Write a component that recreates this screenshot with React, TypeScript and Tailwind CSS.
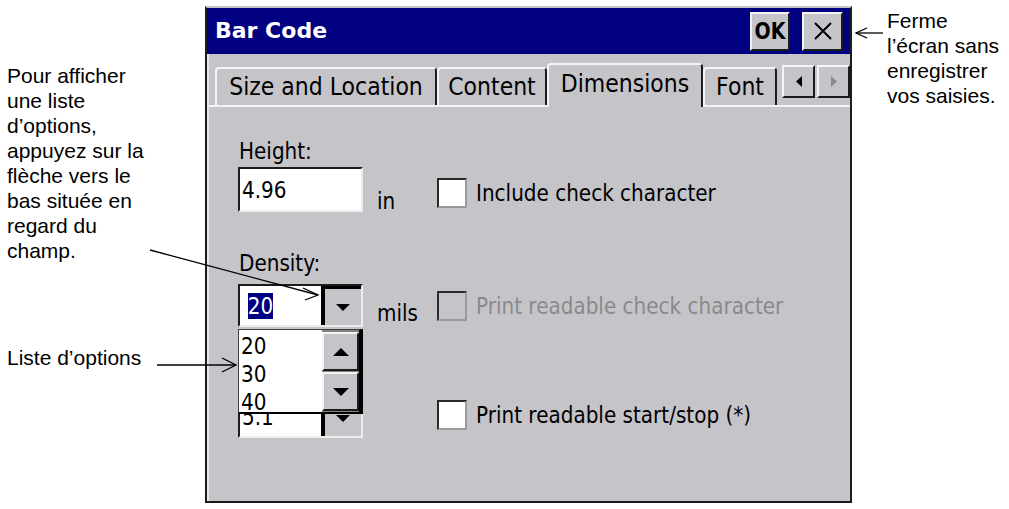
import React from "react";

const GRAY = "bg-[#c5c4c9]";
const raised =
  "border-2 border-t-[#f4f4f4] border-l-[#f4f4f4] border-r-[#1c1c1c] border-b-[#1c1c1c]";
const sunken =
  "border-2 border-t-[#1c1c1c] border-l-[#1c1c1c] border-r-[#ececec] border-b-[#ececec]";

function T({ children, className = "" }: { children: React.ReactNode; className?: string }) {
  return <span className={"inline-block scale-y-[1.15] leading-[24px] " + className}>{children}</span>;
}

function Tri({ dir, w, h, color = "#000" }: { dir: "up" | "down" | "left" | "right"; w: number; h: number; color?: string }) {
  let pts = "";
  if (dir === "down") pts = `0,0 ${w},0 ${w / 2},${h}`;
  if (dir === "up") pts = `0,${h} ${w},${h} ${w / 2},0`;
  if (dir === "left") pts = `${w},0 ${w},${h} 0,${h / 2}`;
  if (dir === "right") pts = `0,0 0,${h} ${w},${h / 2}`;
  return (
    <svg width={w} height={h} viewBox={`0 0 ${w} ${h}`}>
      <polygon points={pts} fill={color} />
    </svg>
  );
}

function Check({ label, disabled = false }: { label: string; disabled?: boolean }) {
  return (
    <div className="flex items-center">
      <div
        className={
          "w-[30px] h-[30px] border-2 border-t-[#2a2a2a] border-l-[#2a2a2a] border-r-[#9a9a9a] border-b-[#9a9a9a] " +
          (disabled ? "bg-[#c5c4c9]" : "bg-white")
        }
      />
      <T className={"ml-[9px] whitespace-nowrap " + (disabled ? "text-[#8a8a8a]" : "text-black")}>{label}</T>
    </div>
  );
}

function ComboButton() {
  return (
    <div className={"w-[40px] h-full border-l-[4px] border-t-[3px] border-black flex items-center justify-center " + GRAY}>
      <Tri dir="down" w={14} h={7} />
    </div>
  );
}

export default function App() {
  return (
    <div className="relative w-[1009px] h-[509px] bg-white flex overflow-hidden">
      {/* Left annotations */}
      <div className="w-[205px] shrink-0 pl-[7px] pt-[63px] font-['Liberation_Sans',Arial,sans-serif] text-[21px] leading-[25px] text-black">
        <div>Pour afficher</div>
        <div>une liste</div>
        <div>d’options,</div>
        <div>appuyez sur la</div>
        <div>flèche vers le</div>
        <div>bas située en</div>
        <div>regard du</div>
        <div>champ.</div>
        <div className="mt-[82px]">Liste d’options</div>
      </div>

      {/* Window */}
      <div className="w-[647px] h-[497px] mt-[6px] shrink-0 flex flex-col border-t-2 border-t-[#c5c4c9] border-l-2 border-r-2 border-b-2 border-l-[#1c1c1c] border-r-[#1c1c1c] border-b-[#1c1c1c] font-['DejaVu_Sans',sans-serif] text-black">
        {/* Title bar */}
        <div className="h-[46px] shrink-0 bg-[#000080] flex items-center pl-[8px] pr-[7px]">
          <span className="text-white font-bold text-[22px] leading-none">Bar Code</span>
          <div className="ml-auto flex gap-[12px]">
            <div className={"w-[40px] h-[39px] flex items-center justify-center " + raised + " " + GRAY}>
              <span className="inline-block font-bold text-[19px] leading-none scale-y-[1.2]">OK</span>
            </div>
            <div className={"w-[41px] h-[39px] flex items-center justify-center " + raised + " " + GRAY}>
              <svg width="20" height="18" viewBox="0 0 20 18">
                <path d="M2 1 L18 17 M18 1 L2 17" stroke="#000" strokeWidth="2" />
              </svg>
            </div>
          </div>
        </div>

        {/* Body */}
        <div className={"flex-1 flex flex-col border-l-2 border-[#e8e8e8] " + GRAY}>
          {/* Tab strip */}
          <div className="h-[53px] shrink-0 flex items-end pl-[6px] border-b-2 border-[#f4f4f4] text-[22px]">
            <div className={"w-[222px] h-[38px] flex items-center justify-center rounded-t-[4px] border-t-2 border-l-2 border-r-2 border-t-[#f4f4f4] border-l-[#f4f4f4] border-r-[#1c1c1c] " + GRAY}>
              <span className="inline-block scale-y-[1.1] leading-[24px] whitespace-nowrap">Size and Location</span>
            </div>
            <div className={"w-[110px] h-[38px] flex items-center justify-center rounded-t-[4px] border-t-2 border-l-2 border-r-2 border-t-[#f4f4f4] border-l-[#f4f4f4] border-r-[#1c1c1c] " + GRAY}>
              <span className="inline-block scale-y-[1.1] leading-[24px]">Content</span>
            </div>
            <div className={"relative w-[156px] h-[44px] -mb-[2px] pb-[4px] flex items-center justify-center rounded-t-[4px] border-t-2 border-l-2 border-r-2 border-t-[#f4f4f4] border-l-[#f4f4f4] border-r-[#1c1c1c] " + GRAY}>
              <span className="inline-block scale-y-[1.1] leading-[24px]">Dimensions</span>
            </div>
            <div className={"w-[74px] h-[38px] flex items-center justify-center rounded-t-[4px] border-t-2 border-l-2 border-r-2 border-t-[#f4f4f4] border-l-[#f4f4f4] border-r-[#1c1c1c] " + GRAY}>
              <span className="inline-block scale-y-[1.1] leading-[24px]">Font</span>
            </div>
            <div className="self-start mt-[11px] ml-[5px] flex gap-[2px]">
              <div className={"w-[33px] h-[33px] flex items-center justify-center " + raised + " " + GRAY}>
                <Tri dir="left" w={6} h={11} />
              </div>
              <div className={"w-[33px] h-[33px] flex items-center justify-center " + raised + " " + GRAY}>
                <Tri dir="right" w={6} h={11} color="#8a8a8a" />
              </div>
            </div>
          </div>

          {/* Panel */}
          <div className="flex-1 flex flex-col pl-[29px] text-[20px]">
            <div className="mt-[29px] h-[24px] pl-[1px]">
              <T>Height:</T>
            </div>

            {/* Row 1 */}
            <div className="mt-[7px] flex items-start">
              <div className={"w-[125px] h-[45px] bg-white flex items-center pl-[2px] " + sunken}>
                <T>4.96</T>
              </div>
              <div className="w-[60px] ml-[14px] mt-[19px]">
                <T>in</T>
              </div>
              <div className="mt-[11px]">
                <Check label="Include check character" />
              </div>
            </div>

            <div className="mt-[32px] h-[24px] pl-[1px]">
              <T>Density:</T>
            </div>

            {/* Row 2 */}
            <div className="mt-[12px] flex items-start">
              <div className="relative z-10">
                <div className={"w-[125px] h-[43px] bg-white flex " + sunken}>
                  <div className="flex-1 flex items-center pl-[8px]">
                    <div className="w-[25px] h-[26px] bg-[#000080] text-white flex items-center justify-center">
                      <T>20</T>
                    </div>
                  </div>
                  <ComboButton />
                </div>
                {/* Dropdown list (overlay) */}
                <div className="absolute left-0 top-[45px] w-[125px] h-[85px] bg-white flex border-l border-t border-[#404040] border-r-[4px] border-r-black border-b-2 border-b-black">
                  <div className="flex-1 pl-[2px] pt-[2px] leading-[28px]">
                    <div className="h-[28px]"><T className="leading-[28px]">20</T></div>
                    <div className="h-[28px]"><T className="leading-[28px]">30</T></div>
                    <div className="h-[28px]"><T className="leading-[28px]">40</T></div>
                  </div>
                  <div className="w-[37px] pt-[2px] flex flex-col gap-[1px] bg-[#808080]">
                    <div className={"h-[39px] flex items-center justify-center " + raised + " " + GRAY}>
                      <Tri dir="up" w={16} h={8} />
                    </div>
                    <div className={"h-[39px] flex items-center justify-center " + raised + " " + GRAY}>
                      <Tri dir="down" w={16} h={8} />
                    </div>
                  </div>
                </div>
              </div>
              <div className="w-[60px] ml-[14px] mt-[14px]">
                <T>mils</T>
              </div>
              <div className="mt-[7px]">
                <Check label="Print readable check character" disabled />
              </div>
            </div>

            {/* Row 3 */}
            <div className="mt-[67px] flex items-start">
              <div className={"w-[125px] h-[43px] bg-white flex " + sunken}>
                <div className="flex-1 flex items-center pl-[2px]">
                  <T>5.1</T>
                </div>
                <ComboButton />
              </div>
              <div className="w-[60px] ml-[14px]" />
              <div className="mt-[5px]">
                <Check label="Print readable start/stop (*)" />
              </div>
            </div>
          </div>
        </div>
      </div>

      {/* Right annotation */}
      <div className="flex-1 pl-[35px] pt-[8px] font-['Liberation_Sans',Arial,sans-serif] text-[21px] leading-[25px] text-black">
        <div>Ferme</div>
        <div>l’écran sans</div>
        <div>enregistrer</div>
        <div>vos saisies.</div>
      </div>

      {/* Pointer arrows overlay */}
      <svg className="absolute left-0 top-0 w-[1009px] h-[509px] pointer-events-none z-20" viewBox="0 0 1009 509">
        <g stroke="#000" strokeWidth="1.3" fill="none">
          <path d="M150 250 L318 295" />
          <path d="M303 288 L318 295 L305 300" />
          <path d="M157 365 L236 365" />
          <path d="M222 358 L236 365 L222 372" />
          <path d="M883 33 L856 33" />
          <path d="M867 28 L856 33 L867 38" />
        </g>
      </svg>
    </div>
  );
}
